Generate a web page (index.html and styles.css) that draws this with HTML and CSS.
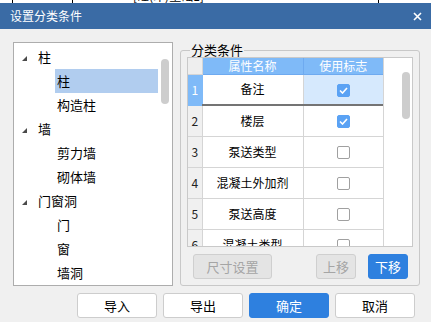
FILE: index.html
```html
<!DOCTYPE html>
<html>
<head>
<meta charset="utf-8">
<link rel="stylesheet" href="styles.css">
</head>
<body>
<div class="behind">
  <div class="behind-row">
    <span class="vl vl1"></span>
    <span class="vl vl2"></span>
    <span class="bt bt1">[砼(印)垫础1]</span>
    <span class="bt bt2">0.0001</span>
    <span class="bt bt3">11.001</span>
    <span class="bt bt4">0</span>
    <span class="vl vl3"></span>
  </div>
</div>
<div class="dialog">
  <div class="titlebar">
    <span class="title">设置分类条件</span>
    <svg class="close" width="9" height="9" viewBox="0 0 9 9"><path d="M1 1L8 8M8 1L1 8" stroke="#fff" stroke-width="1.6" fill="none"/></svg>
  </div>
  <div class="main">
    <div class="tree">
      <div class="tree-list">
        <div class="node parent"><svg class="tri" width="5" height="5" viewBox="0 0 5 5"><polygon points="5,0 5,5 0,5" fill="#4a4a4a"/></svg><span>柱</span></div>
        <div class="node child selected">柱</div>
        <div class="node child">构造柱</div>
        <div class="node parent"><svg class="tri" width="5" height="5" viewBox="0 0 5 5"><polygon points="5,0 5,5 0,5" fill="#4a4a4a"/></svg><span>墙</span></div>
        <div class="node child">剪力墙</div>
        <div class="node child">砌体墙</div>
        <div class="node parent"><svg class="tri" width="5" height="5" viewBox="0 0 5 5"><polygon points="5,0 5,5 0,5" fill="#4a4a4a"/></svg><span>门窗洞</span></div>
        <div class="node child">门</div>
        <div class="node child">窗</div>
        <div class="node child">墙洞</div>
      </div>
      <div class="vscroll"><div class="thumb tree-thumb"></div></div>
    </div>
    <fieldset class="group">
      <legend>分类条件</legend>
      <div class="grid">
        <table class="props">
          <colgroup><col class="c-num"><col class="c-name"><col class="c-flag"></colgroup>
          <thead>
            <tr><th class="corner"></th><th>属性名称</th><th>使用标志</th></tr>
          </thead>
          <tbody>
            <tr class="sel"><td class="num">1</td><td class="name">备注</td><td class="flag"><span class="cb on"><svg width="9" height="7" viewBox="0 0 9 7"><path d="M1 3.5L3.5 6L8 1" stroke="#fff" stroke-width="1.6" fill="none"/></svg></span></td></tr>
            <tr><td class="num">2</td><td class="name">楼层</td><td class="flag"><span class="cb on"><svg width="9" height="7" viewBox="0 0 9 7"><path d="M1 3.5L3.5 6L8 1" stroke="#fff" stroke-width="1.6" fill="none"/></svg></span></td></tr>
            <tr><td class="num">3</td><td class="name">泵送类型</td><td class="flag"><span class="cb"></span></td></tr>
            <tr><td class="num">4</td><td class="name">混凝土外加剂</td><td class="flag"><span class="cb"></span></td></tr>
            <tr><td class="num">5</td><td class="name">泵送高度</td><td class="flag"><span class="cb"></span></td></tr>
            <tr><td class="num">6</td><td class="name">混凝土类型</td><td class="flag"><span class="cb"></span></td></tr>
          </tbody>
        </table>
        <div class="gscroll"><div class="thumb grid-thumb"></div></div>
      </div>
      <div class="group-actions">
        <button class="btn disabled wide">尺寸设置</button>
        <div class="move">
          <button class="btn disabled small">上移</button>
          <button class="btn primary small">下移</button>
        </div>
      </div>
    </fieldset>
  </div>
  <div class="footer">
    <button class="btn foot">导入</button>
    <button class="btn foot">导出</button>
    <button class="btn foot primary">确定</button>
    <button class="btn foot">取消</button>
  </div>
</div>
</body>
</html>
```
FILE: styles.css
```css
* { box-sizing: border-box; }
html, body { margin: 0; padding: 0; }
body {
  width: 431px;
  height: 322px;
  overflow: hidden;
  background: #f0f0f0;
  font-family: "Noto Sans CJK SC", "Noto Sans", sans-serif;
  font-size: 13px;
  color: #000;
}

/* window behind the dialog */
.behind {
  height: 3px;
  overflow: hidden;
  background: #fff;
}
.behind-row {
  display: flex;
  height: 14px;
  margin-top: -11px;
  font-family: "Liberation Sans", "Noto Sans CJK SC", sans-serif;
  font-size: 12px;
  line-height: 14px;
  white-space: nowrap;
}
.vl { display: block; width: 1px; height: 14px; background: #000; flex: none; }
.bt { display: block; flex: none; }
.vl1 { margin-left: 12px; }
.vl2 { margin-left: 59px; }
.bt1 { margin-left: 60px; width: 62px; font-family: "Noto Sans CJK SC", sans-serif; }
.bt2 { margin-left: 28px; width: 40px; }
.bt3 { margin-left: 22px; width: 40px; }
.bt4 { margin-left: 43px; width: 8px; }
.vl3 { margin-left: 2px; }

/* dialog */
.dialog { display: flex; flex-direction: column; }
.titlebar {
  height: 26px;
  background: #3a6ba5;
  display: flex;
  align-items: center;
  justify-content: space-between;
  padding: 0 9px 0 10px;
}
.title { color: #fff; font-size: 12px; line-height: 14px; }
.close { display: block; }

.main {
  display: flex;
  align-items: flex-start;
  padding: 13px 0 0 13px;
  gap: 7px;
}

/* tree */
.tree {
  width: 160px;
  height: 244px;
  background: #fff;
  border: 1px solid #adadad;
  display: flex;
}
.tree-list { flex: 1; padding-top: 2px; }
.node {
  height: 24px;
  line-height: 24px;
  font-size: 13px;
  display: flex;
  align-items: center;
}
.node.parent { padding-left: 8px; }
.node.parent .tri { display: block; margin-right: 11px; margin-top: 2px; }
.node.child { margin-left: 41px; padding-left: 2px; }
.node.selected { background: #b1cdef; }
.vscroll { width: 14px; padding: 16px 0 0 3px; }
.thumb { background: #cdcdcd; border-radius: 4px; width: 8px; }
.tree-thumb { height: 45px; }

/* group box */
.group {
  width: 240px;
  margin: 1px 0 0 0;
  padding: 0 6px 6px 6px;
  border: 1px solid #c8c8c8;
  border-radius: 3px;
  min-width: 0;
}
.group legend {
  padding: 0 1px;
  margin-left: 3px;
  font-size: 13px;
  line-height: 14px;
}

.grid {
  height: 190px;
  border: 1px solid #c9c9c9;
  background: #fff;
  display: flex;
  overflow: hidden;
}
.props {
  table-layout: fixed;
  border-collapse: collapse;
  border-style: hidden;
  width: 195px;
  align-self: flex-start;
  flex: none;
  font-size: 12px;
}
.c-num { width: 14px; }
.c-name { width: 101px; }
.c-flag { width: 80px; }
.props th {
  height: 16px;
  padding: 0;
  background: #7fbaf8;
  color: #fff;
  font-weight: normal;
  line-height: 14px;
  border: 1px solid #6eaaf0;
  text-align: center;
}
.props th.corner { background: #eeeeee; border-color: #d5d5d5; }
.props td {
  height: 31px;
  padding: 0;
  border: 1px solid #d5d5d5;
  text-align: center;
  line-height: 14px;
  white-space: nowrap;
  overflow: hidden;
}
.props td.num { background: #f0f0f0; color: #222; font-size: 12px; }
.props tr.sel td.num { background: #7fbaf8; color: #fff; border-color: #7fbaf8; }
.props tr.sel td.name { border-bottom: 2px solid #747474; }
.props tr.sel td.flag { background: #d6e9fd; border-bottom: 2px solid #747474; border-right: 2px solid #747474; }
.cb {
  display: inline-flex;
  align-items: center;
  justify-content: center;
  width: 13px;
  height: 13px;
  border: 1px solid #a0a0a0;
  border-radius: 2px;
  background: #fff;
  vertical-align: middle;
}
.cb.on { background: #5aa2f4; border-color: #5aa2f4; }
.cb svg { display: block; }

.gscroll {
  flex: 1;
  border-left: 1px solid #d5d5d5;
  padding: 14px 0 0 18px;
}
.grid-thumb { height: 47px; }

.group-actions {
  display: flex;
  justify-content: space-between;
  margin-top: 7px;
  padding: 0 5px 0 6px;
}
.move { display: flex; gap: 12px; }

.btn {
  height: 25px;
  padding: 0;
  border: 1px solid #cdcdcd;
  border-radius: 3px;
  background: #fff;
  font-family: "Noto Sans CJK SC", sans-serif;
  font-size: 13px;
  line-height: 14px;
  color: #000;
}
.btn.wide { width: 79px; }
.btn.small { width: 40px; }
.btn.disabled { background: #e4e4e4; border-color: #cfcfcf; color: #a5a5a5; }
.btn.primary { background: #2e80df; border-color: #2e80df; color: #fff; }

.footer {
  display: flex;
  justify-content: flex-end;
  gap: 6px;
  padding: 7px 16px 0 0;
}
.btn.foot { width: 80px; }
```
